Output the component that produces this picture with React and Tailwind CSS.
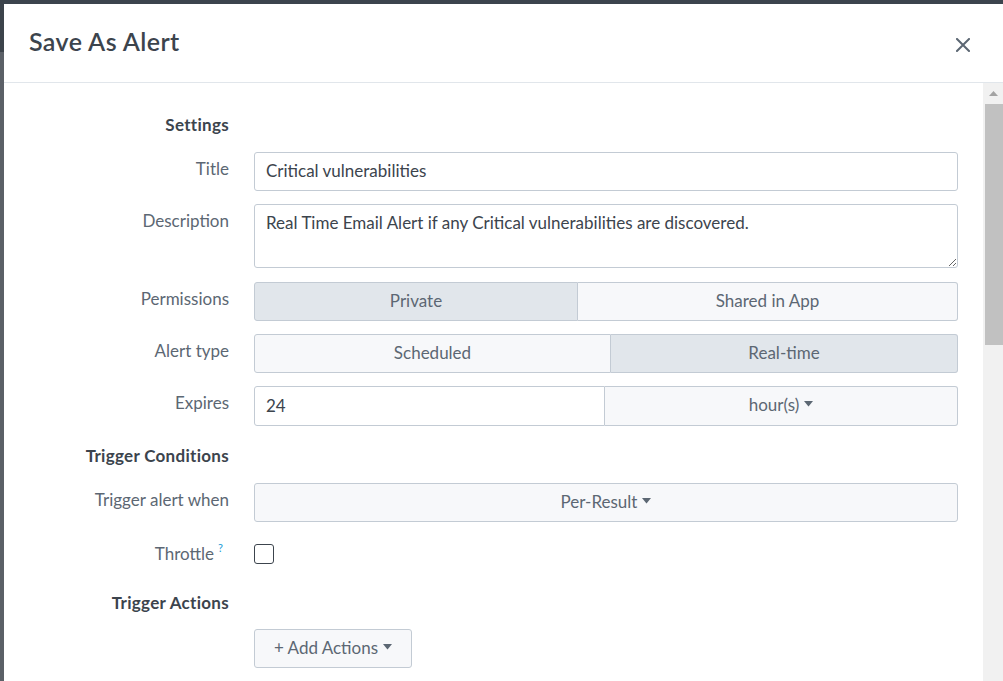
import React from "react";

const Caret = () => (
  <svg width="9" height="6" viewBox="0 0 9 6" className="inline-block ml-[5px] mb-[2px]">
    <path d="M0 0 L9 0 L4.5 5.5 Z" fill="#5c6773" />
  </svg>
);

const Label = ({ children }) => (
  <div className="text-right text-[17px] leading-[24px] text-[#5c6773] pt-[5px]">{children}</div>
);

const Heading = ({ children }) => (
  <div className="text-right text-[17px] leading-[24px] font-bold text-[#3c444d] tracking-[0.3px]">{children}</div>
);

export default function App() {
  return (
    <div
      className="w-[1003px] h-[681px] overflow-hidden bg-[#3c444d] flex"
      style={{ fontFamily: "Lato, 'Open Sans', sans-serif" }}
    >
      <div className="w-[4px] flex flex-col shrink-0">
        <div className="h-[52px] bg-[#3c434b]" />
        <div className="flex-1 bg-[#5b6067]" />
      </div>
      <div className="flex-1 pt-[4px] flex flex-col">
        <div className="flex-1 bg-white flex flex-col">
          {/* Header */}
          <div className="h-[79px] shrink-0 border-b border-[#e1e6eb] flex items-center justify-between pl-[25px] pr-[33px]">
            <div className="text-[25px] font-semibold text-[#3c444d] tracking-[0.4px] -mt-[2px]">Save As Alert</div>
            <svg width="14" height="14" viewBox="0 0 14 14" className="mt-[3px]">
              <path d="M1 1 L13 13 M13 1 L1 13" stroke="#5c6773" strokeWidth="2" strokeLinecap="square" />
            </svg>
          </div>
          {/* Body */}
          <div className="flex-1 flex">
            <div className="flex-1 pt-[30px]">
              <div className="grid grid-cols-[225px_704px] gap-x-[25px]">
                <Heading>Settings</Heading>
                <div />
              </div>
              <div className="grid grid-cols-[225px_704px] gap-x-[25px] gap-y-[13px] mt-[15px]">
                <Label>Title</Label>
                <div className="h-[39px] border border-[#c3cbd4] rounded-[3px] flex items-center px-[11px] pb-[1px] text-[17px] text-[#3c444d]">
                  Critical vulnerabilities
                </div>

                <Label>Description</Label>
                <textarea
                  className="h-[64px] border border-[#c3cbd4] rounded-[3px] px-[11px] pt-[6px] text-[17px] leading-[24px] text-[#3c444d] resize-y outline-none"
                  style={{ fontFamily: "Lato, 'Open Sans', sans-serif" }}
                  defaultValue="Real Time Email Alert if any Critical vulnerabilities are discovered."
                />
              </div>
              <div className="grid grid-cols-[225px_704px] gap-x-[25px] gap-y-[13px] mt-[14px]">
                <Label>Permissions</Label>
                <div className="h-[39px] flex text-[17px] text-[#5c6773]">
                  <div className="w-[324px] bg-[#e1e6eb] border border-[#c3cbd4] rounded-l-[3px] flex items-center justify-center pb-[2px]">Private</div>
                  <div className="flex-1 bg-[#f7f8fa] border border-l-0 border-[#c3cbd4] rounded-r-[3px] flex items-center justify-center pb-[2px]">Shared in App</div>
                </div>

                <Label>Alert type</Label>
                <div className="h-[39px] flex text-[17px] text-[#5c6773]">
                  <div className="w-[357px] bg-[#f7f8fa] border border-[#c3cbd4] rounded-l-[3px] flex items-center justify-center pb-[2px]">Scheduled</div>
                  <div className="flex-1 bg-[#e1e6eb] border border-l-0 border-[#c3cbd4] rounded-r-[3px] flex items-center justify-center pb-[2px]">Real-time</div>
                </div>

                <Label>Expires</Label>
                <div className="h-[40px] flex text-[17px]">
                  <div className="w-[351px] bg-white border border-[#c3cbd4] rounded-l-[3px] flex items-center px-[11px] pb-[1px] text-[#3c444d]">24</div>
                  <div className="flex-1 bg-[#f7f8fa] border border-l-0 border-[#c3cbd4] rounded-r-[3px] flex items-center justify-center pb-[2px] text-[#5c6773]">
                    hour(s)<Caret />
                  </div>
                </div>
              </div>

              <div className="grid grid-cols-[225px_704px] gap-x-[25px] mt-[18px]">
                <Heading>Trigger Conditions</Heading>
                <div />
              </div>
              <div className="grid grid-cols-[225px_704px] gap-x-[25px] mt-[15px]">
                <Label>Trigger alert when</Label>
                <div className="h-[39px] bg-[#f7f8fa] border border-[#c3cbd4] rounded-[3px] flex items-center justify-center pb-[2px] text-[17px] text-[#5c6773]">
                  Per-Result<Caret />
                </div>
              </div>
              <div className="grid grid-cols-[225px_704px] gap-x-[25px] mt-[22px] h-[20px] items-center">
                <div className="text-right text-[17px] leading-[20px] h-[20px] text-[#5c6773] pr-[6px] flex justify-end items-center">
                  <span>Throttle</span>
                  <span className="text-[#1a9cd6] text-[11px] leading-[11px] ml-[4px] self-start -mt-[2px]">?</span>
                </div>
                <div className="w-[20px] h-[20px] border border-[#3c444d] rounded-[3px] bg-white" />
              </div>
              <div className="grid grid-cols-[225px_704px] gap-x-[25px] mt-[27px]">
                <Heading>Trigger Actions</Heading>
                <div />
              </div>
              <div className="grid grid-cols-[225px_704px] gap-x-[25px] mt-[14px]">
                <div />
                <div>
                  <div className="w-[158px] h-[39px] bg-[#f7f8fa] border border-[#c3cbd4] rounded-[3px] flex items-center justify-center pb-[2px] text-[17px] text-[#5c6773]">
                    + Add Actions<Caret />
                  </div>
                </div>
              </div>
            </div>
            {/* scrollbar */}
            <div className="w-[20px] bg-[#f1f1f1] flex flex-col">
              <div className="h-[21px] flex items-center justify-center">
                <svg width="9" height="5" viewBox="0 0 9 5">
                  <path d="M0 5 L4.5 0 L9 5 Z" fill="#a3a3a3" />
                </svg>
              </div>
              <div className="ml-[2px] h-[241px] bg-[#c1c1c1]" />
            </div>
          </div>
        </div>
      </div>
    </div>
  );
}
